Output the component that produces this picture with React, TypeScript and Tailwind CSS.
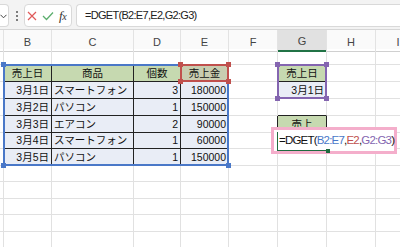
import React from "react";

type Cell = { t: string; a: "l" | "c" | "r"; k: "hdr" | "hdrE" | "data" | "plain" };

const data: Record<string, Cell> = {
  "2-1": { t: "売上日", a: "c", k: "hdr" },
  "2-2": { t: "商品", a: "c", k: "hdr" },
  "2-3": { t: "個数", a: "c", k: "hdr" },
  "2-4": { t: "売上金", a: "c", k: "hdrE" },
  "3-1": { t: "3月1日", a: "r", k: "data" },
  "3-2": { t: "スマートフォン", a: "l", k: "data" },
  "3-3": { t: "3", a: "r", k: "data" },
  "3-4": { t: "180000", a: "r", k: "data" },
  "4-1": { t: "3月2日", a: "r", k: "data" },
  "4-2": { t: "パソコン", a: "l", k: "data" },
  "4-3": { t: "1", a: "r", k: "data" },
  "4-4": { t: "150000", a: "r", k: "data" },
  "5-1": { t: "3月3日", a: "r", k: "data" },
  "5-2": { t: "エアコン", a: "l", k: "data" },
  "5-3": { t: "2", a: "r", k: "data" },
  "5-4": { t: "90000", a: "r", k: "data" },
  "6-1": { t: "3月4日", a: "r", k: "data" },
  "6-2": { t: "スマートフォン", a: "l", k: "data" },
  "6-3": { t: "1", a: "r", k: "data" },
  "6-4": { t: "60000", a: "r", k: "data" },
  "7-1": { t: "3月5日", a: "r", k: "data" },
  "7-2": { t: "パソコン", a: "l", k: "data" },
  "7-3": { t: "1", a: "r", k: "data" },
  "7-4": { t: "150000", a: "r", k: "data" },
  "2-6": { t: "売上日", a: "c", k: "hdr" },
  "3-6": { t: "3月1日", a: "r", k: "data" },
  "5-6": { t: "売上", a: "c", k: "hdr" },
};

const isTable = (r: number, c: number) =>
  (r >= 2 && r <= 7 && c >= 1 && c <= 4) ||
  (c === 6 && (r === 2 || r === 3 || r === 5));

const letters = ["", "B", "C", "D", "E", "F", "G", "H", "I"];

function Corner({ x, y, cls }: { x: string; y: string; cls: string }) {
  return <div className={`absolute w-[5px] h-[5px] ${x} ${y} ${cls}`} />;
}

export default function App() {
  const rows = Array.from({ length: 12 }, (_, i) => i + 1);
  const cols = Array.from({ length: 9 }, (_, i) => i);
  return (
    <div className="w-[400px] h-[247px] overflow-hidden bg-white relative font-['Liberation_Sans','Noto_Sans_CJK_JP',sans-serif] text-[#111]">
      {/* toolbar */}
      <div className="h-[29px] bg-[#f3f3f3] flex items-start pt-[4px]">
        <div className="w-[9px] h-[23px] bg-white border border-l-0 border-[#d9d9d9] rounded-r-[4px] flex items-center">
          <svg width="7" height="5" viewBox="0 0 7 5" className="mt-[1px]">
            <path d="M0.5 0.8 L3.5 3.8 L6.5 0.8" fill="none" stroke="#444" strokeWidth="1" />
          </svg>
        </div>
        <div className="ml-[6px] w-[3px] h-[23px] flex flex-col items-center justify-center gap-[2px]">
          <div className="w-[2px] h-[2px] bg-[#555] rounded-full" />
          <div className="w-[2px] h-[2px] bg-[#555] rounded-full" />
          <div className="w-[2px] h-[2px] bg-[#555] rounded-full" />
        </div>
        <div className="ml-[6px] w-[48px] h-[23px] bg-white border border-[#d9d9d9] rounded-[4px] flex items-center">
          <svg width="10" height="10" viewBox="0 0 10 10" className="ml-[2px]">
            <path d="M1 1 L9 9 M9 1 L1 9" stroke="#e05a5a" strokeWidth="1.2" fill="none" />
          </svg>
          <svg width="12" height="10" viewBox="0 0 12 10" className="ml-[5px]">
            <path d="M1 5 L4.5 8.5 L11 1.5" stroke="#5cae6e" strokeWidth="1.3" fill="none" />
          </svg>
          <span className="ml-[5px] font-['Liberation_Serif',serif] italic text-[13px] leading-none text-[#333] tracking-[-0.5px]">
            f<span className="text-[10px]">x</span>
          </span>
        </div>
        <div className="ml-[4px] flex-1 h-[23px] bg-white border border-r-0 border-[#d9d9d9] rounded-l-[4px] flex items-center pl-[8px] text-[11px] tracking-[-0.7px] text-[#222]">
          =DGET(B2:E7,E2,G2:G3)
        </div>
      </div>
      {/* column headers */}
      <div className="grid grid-cols-[4px_48px_82px_47px_48px_49px_49px_49px_45px] h-[20px] border-t border-[#d6d6d6] bg-[#fafafa]">
        {cols.map((c) => (
          <div
            key={c}
            className={`flex items-center justify-center pt-[3px] text-[11px] text-[#444] border-b ${
              c === 6 ? "bg-[#e1e1e1] border-b-2 border-b-[#217346]" : "border-b-[#d0d0d0]"
            } border-r border-r-[#e3e3e3]`}
          >
            {letters[c]}
          </div>
        ))}
      </div>
      {/* grid */}
      <div className="grid grid-cols-[4px_48px_82px_47px_48px_49px_49px_49px_45px] grid-rows-[16px_17px_17px_17px_17px_16px_17px_16px_17px_16px_17px_17px]">
        {rows.map((r) =>
          cols.map((c) => {
            const cell = data[`${r}-${c}`];
            const rb = isTable(r, c) || isTable(r, c + 1) ? "border-r-[#222]" : "border-r-[#e1e1e1]";
            const bb = isTable(r, c) || isTable(r + 1, c) ? "border-b-[#222]" : "border-b-[#e1e1e1]";
            const bg = !cell
              ? ""
              : cell.k === "hdr"
              ? "bg-[#c6d9b0]"
              : cell.k === "hdrE"
              ? "bg-[#c9cdb0]"
              : cell.k === "data"
              ? "bg-[#e9edf6]"
              : "";
            const al = !cell
              ? ""
              : cell.a === "r"
              ? "justify-end pr-[2px]"
              : cell.a === "l"
              ? "justify-start pl-[2px]"
              : "justify-center";
            return (
              <div
                key={`${r}-${c}`}
                className={`border-r border-b ${rb} ${bb} ${bg} ${al} flex items-center text-[10.5px] leading-none whitespace-nowrap overflow-hidden`}
              >
                {cell ? cell.t : null}
              </div>
            );
          })
        )}
      </div>

      {/* range highlights */}
      <div className="absolute left-[3px] top-[64px] w-[226px] h-[102px] border-2 border-[#4a78c8]">
        <Corner x="-left-[4px]" y="-top-[4px]" cls="bg-[#4a78c8]" />
        <Corner x="-left-[4px]" y="-bottom-[4px]" cls="bg-[#4a78c8]" />
        <Corner x="-right-[4px]" y="-bottom-[4px]" cls="bg-[#4a78c8]" />
      </div>
      <div className="absolute left-[180px] top-[64px] w-[49px] h-[18px] border-2 border-[#c0504d]">
        <Corner x="-left-[4px]" y="-top-[4px]" cls="bg-[#c0504d]" />
        <Corner x="-right-[4px]" y="-top-[4px]" cls="bg-[#c0504d]" />
        <Corner x="-left-[4px]" y="-bottom-[4px]" cls="bg-[#c0504d]" />
        <Corner x="-right-[4px]" y="-bottom-[4px]" cls="bg-[#c0504d]" />
      </div>
      <div className="absolute left-[277px] top-[64px] w-[50px] h-[35px] border-2 border-[#8465b0]">
        <Corner x="-left-[4px]" y="-top-[4px]" cls="bg-[#8465b0]" />
        <Corner x="-right-[4px]" y="-top-[4px]" cls="bg-[#8465b0]" />
        <Corner x="-left-[4px]" y="-bottom-[4px]" cls="bg-[#8465b0]" />
        <Corner x="-right-[4px]" y="-bottom-[4px]" cls="bg-[#8465b0]" />
      </div>

      {/* editing cell with annotation */}
      <div className="absolute left-[271px] top-[127px] w-[126px] h-[27px] border-[3px] border-[#f4aecb] bg-white">
        <div className="absolute left-[3px] top-[2px] w-[50px] h-[19px] border-l border-b border-[#1e6b3f]" />
        <div className="absolute left-[52px] top-[19px] w-[4px] h-[4px] bg-[#1e6b3f]" />
        <div className="absolute left-[5px] top-0 h-full flex items-center text-[11.5px] tracking-[-0.8px] text-[#111] whitespace-nowrap">
          =DGET(<span className="text-[#4a78c8]">B2:E7</span>,<span className="text-[#c0504d]">E2</span>,
          <span className="text-[#8465b0]">G2:G3</span>)
        </div>
      </div>
    </div>
  );
}
